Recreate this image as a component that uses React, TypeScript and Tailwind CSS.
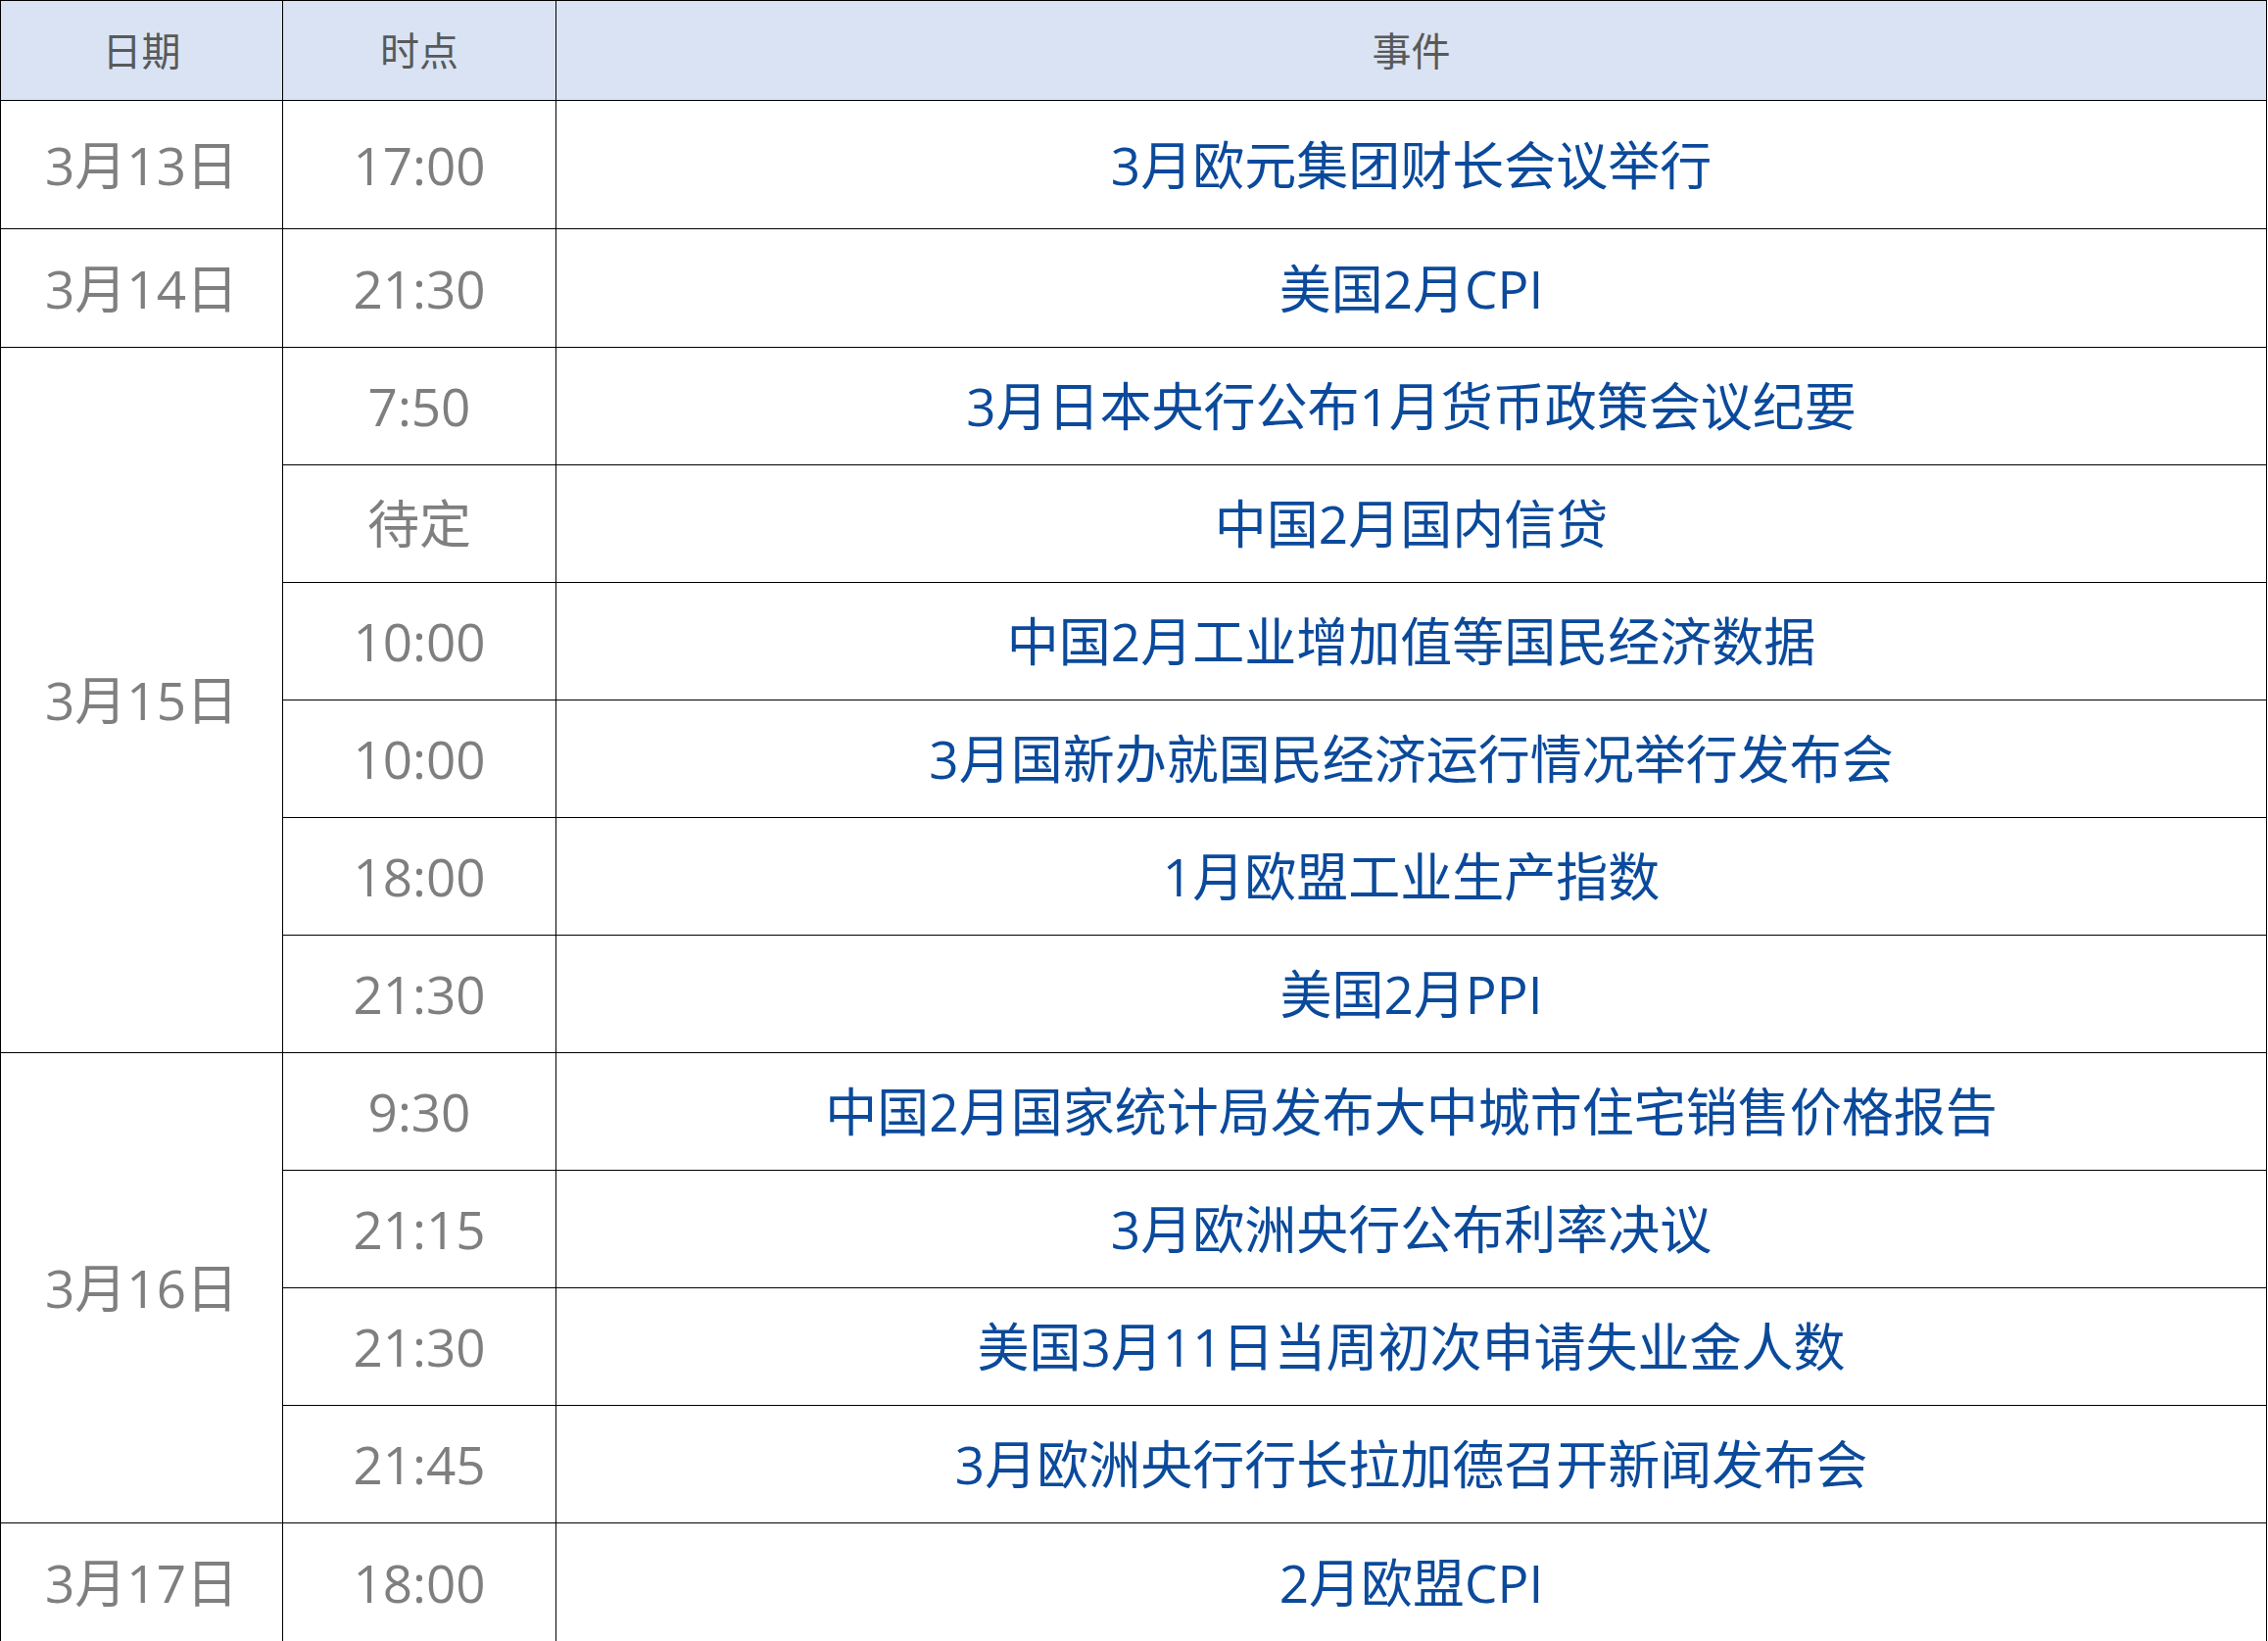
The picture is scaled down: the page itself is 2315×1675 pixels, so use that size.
const FONT = "font-['Open_Sans','Noto_Sans_CJK_SC',sans-serif]";

type Row = { time: string; event: string; h: string };
type Group = { date: string; rows: Row[] };

const groups: Group[] = [
  { date: "3月13日", rows: [{ time: "17:00", event: "3月欧元集团财长会议举行", h: "h-[131px]" }] },
  { date: "3月14日", rows: [{ time: "21:30", event: "美国2月CPI", h: "h-[121px]" }] },
  {
    date: "3月15日",
    rows: [
      { time: "7:50", event: "3月日本央行公布1月货币政策会议纪要", h: "h-[120px]" },
      { time: "待定", event: "中国2月国内信贷", h: "h-[120px]" },
      { time: "10:00", event: "中国2月工业增加值等国民经济数据", h: "h-[120px]" },
      { time: "10:00", event: "3月国新办就国民经济运行情况举行发布会", h: "h-[120px]" },
      { time: "18:00", event: "1月欧盟工业生产指数", h: "h-[120px]" },
      { time: "21:30", event: "美国2月PPI", h: "h-[120px]" },
    ],
  },
  {
    date: "3月16日",
    rows: [
      { time: "9:30", event: "中国2月国家统计局发布大中城市住宅销售价格报告", h: "h-[120px]" },
      { time: "21:15", event: "3月欧洲央行公布利率决议", h: "h-[120px]" },
      { time: "21:30", event: "美国3月11日当周初次申请失业金人数", h: "h-[120px]" },
      { time: "21:45", event: "3月欧洲央行行长拉加德召开新闻发布会", h: "h-[120px]" },
    ],
  },
  { date: "3月17日", rows: [{ time: "18:00", event: "2月欧盟CPI", h: "h-[121px]" }] },
];

const cell = "border border-black text-center align-middle leading-none p-0";

export default function App() {
  return (
    <div className={`min-h-screen bg-white ${FONT}`}>
      <table className="w-[2314px] table-fixed border-collapse">
        <colgroup>
          <col className="w-[288px]" />
          <col className="w-[279px]" />
          <col />
        </colgroup>
        <thead>
          <tr className="h-[102px] bg-[#dae3f3]">
            <th className={`${cell} text-[40px] font-normal text-[#595959]`}>日期</th>
            <th className={`${cell} text-[40px] font-normal text-[#595959]`}>时点</th>
            <th className={`${cell} text-[40px] font-normal text-[#595959]`}>事件</th>
          </tr>
        </thead>
        <tbody>
          {groups.map((g) =>
            g.rows.map((r, i) => (
              <tr key={g.date + i} className={r.h}>
                {i === 0 && (
                  <td rowSpan={g.rows.length} className={`${cell} text-[53px] text-[#7f7f7f]`}>
                    {g.date}
                  </td>
                )}
                <td className={`${cell} text-[53px] text-[#7f7f7f]`}>{r.time}</td>
                <td className={`${cell} text-[53px] text-[#0b4a9b]`}>{r.event}</td>
              </tr>
            ))
          )}
        </tbody>
      </table>
    </div>
  );
}
